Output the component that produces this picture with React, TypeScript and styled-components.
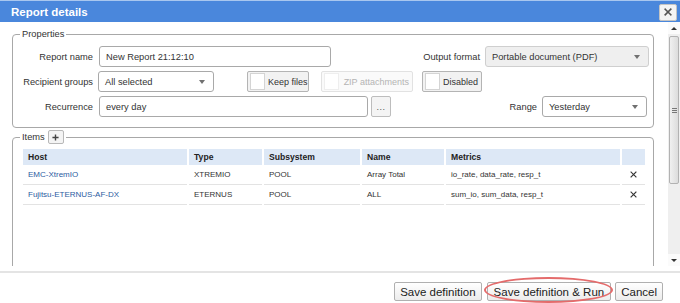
import React from "react";
import styled, { createGlobalStyle } from "styled-components";

const GlobalStyle = createGlobalStyle`
  html, body {
    margin: 0;
    padding: 0;
    background: #ffffff;
  }
  body {
    font-family: "Liberation Sans", Arial, sans-serif;
    color: #333333;
  }
  * {
    box-sizing: border-box;
  }
`;

const Dialog = styled.div`
  width: 680px;
  height: 303px;
  display: flex;
  flex-direction: column;
  background: #ffffff;
  overflow: hidden;
`;

const TitleBar = styled.div`
  height: 22px;
  border-top: 1px solid #a9c7ef;
  background: #4a87dc;
  display: flex;
  align-items: center;
  padding: 0 3px 0 11px;
`;

const Title = styled.div`
  flex: 1;
  color: #ffffff;
  font-weight: bold;
  font-size: 11.5px;
`;

const CloseButton = styled.div`
  width: 18px;
  height: 17px;
  margin-top: 1px;
  border: 1px solid #c4c4c4;
  border-radius: 2px;
  background: #f4f4f4;
  display: flex;
  align-items: center;
  justify-content: center;
`;

const Body = styled.div`
  height: 244px;
  display: flex;
  overflow: hidden;
`;

const Content = styled.div`
  flex: 1;
  padding: 6px 14px 0 12px;
  overflow: hidden;
`;

const Fieldset = styled.fieldset<{ $tall?: boolean }>`
  margin: 0 0 2px 0;
  border: 1px solid #a8a8a8;
  border-radius: 4px;
  padding: ${(p) => (p.$tall ? "5px 7px 0 10px" : "6px 0 10px 0")};
  min-height: ${(p) => (p.$tall ? "200px" : "auto")};
  min-width: 0;
`;

const Legend = styled.legend<{ $shift?: number }>`
  margin-left: ${(p) => p.$shift ?? 7}px;
  padding: 0 2px;
  font-size: 9.3px;
  line-height: 12px;
  color: #333333;
  display: flex;
  align-items: center;
  gap: 3px;
`;

const PlusButton = styled.div`
  width: 16px;
  height: 14px;
  border: 1px solid #b8b8b8;
  border-radius: 2px;
  background: #f4f4f4;
  display: flex;
  align-items: center;
  justify-content: center;
`;

const Rows = styled.div`
  display: flex;
  flex-direction: column;
  gap: 4px;
`;

const Row = styled.div`
  display: flex;
  align-items: center;
  height: 21px;
`;

const Label = styled.div<{ $width?: number; $auto?: boolean }>`
  width: ${(p) => (p.$width ? `${p.$width}px` : "auto")};
  margin-left: ${(p) => (p.$auto ? "auto" : "0")};
  margin-right: 5px;
  text-align: right;
  font-size: 9.3px;
  color: #333333;
  white-space: nowrap;
`;

const TextInput = styled.div<{ $width: number }>`
  width: ${(p) => p.$width}px;
  height: 21px;
  border: 1px solid #a9a9a9;
  border-radius: 3px;
  background: #ffffff;
  padding-left: 6px;
  display: flex;
  align-items: center;
  font-size: 9.3px;
  color: #333333;
  margin-left: 1px;
`;

const Select = styled.div<{ $width: number; $disabled?: boolean; $right?: number }>`
  width: ${(p) => p.$width}px;
  height: 21px;
  margin-right: ${(p) => p.$right ?? 0}px;
  border: 1px solid ${(p) => (p.$disabled ? "#cfcfcf" : "#a9a9a9")};
  border-radius: 3px;
  background: ${(p) => (p.$disabled ? "#efefef" : "#ffffff")};
  padding: 0 8px 0 6px;
  display: flex;
  align-items: center;
  font-size: 9.3px;
  color: #333333;
`;

const SelectText = styled.span`
  flex: 1;
  white-space: nowrap;
`;

const Caret = styled.span`
  width: 0;
  height: 0;
  border-left: 3px solid transparent;
  border-right: 3px solid transparent;
  border-top: 4px solid #707070;
`;

const Toggle = styled.div<{ $width: number; $gap: number; $disabled?: boolean }>`
  width: ${(p) => p.$width}px;
  height: 21px;
  margin-left: ${(p) => p.$gap}px;
  border: 1px solid ${(p) => (p.$disabled ? "#e2e2e2" : "#b4b4b4")};
  border-radius: 2px;
  background: ${(p) => (p.$disabled ? "#fafafa" : "#f2f2f2")};
  padding: 1px 3px 1px 2px;
  display: flex;
  align-items: center;
  gap: 3px;
  font-size: 9px;
  color: ${(p) => (p.$disabled ? "#b4b4b4" : "#333333")};
  white-space: nowrap;
`;

const ToggleBox = styled.span<{ $disabled?: boolean }>`
  width: 15px;
  height: 17px;
  background: #ffffff;
  border: 1px solid ${(p) => (p.$disabled ? "#eeeeee" : "#d4d4d4")};
  flex-shrink: 0;
`;

const ToggleText = styled.span`
  flex: 1;
  text-align: right;
`;

const MoreButton = styled.div`
  width: 20px;
  height: 21px;
  margin-left: 3px;
  border: 1px solid #bdbdbd;
  border-radius: 2px;
  background: #f4f4f4;
  display: flex;
  align-items: center;
  justify-content: center;
  font-size: 9px;
  letter-spacing: 0.5px;
  color: #555555;
`;

const Table = styled.div`
  display: grid;
  grid-template-columns: 164px 73px 96px 82px 174px 23px;
  column-gap: 2px;
`;

const Cell = styled.div<{ $head?: boolean; $link?: boolean; $center?: boolean }>`
  height: ${(p) => (p.$head ? "16px" : "20px")};
  background: ${(p) => (p.$head ? "#dde8f6" : "#ffffff")};
  border-bottom: ${(p) => (p.$head ? "none" : "1px solid #e3e3e3")};
  padding-left: ${(p) => (p.$center ? "0" : "5px")};
  display: flex;
  align-items: center;
  justify-content: ${(p) => (p.$center ? "center" : "flex-start")};
  font-size: ${(p) => (p.$head ? "8.6px" : "8px")};
  font-weight: ${(p) => (p.$head ? "bold" : "normal")};
  color: ${(p) => (p.$link ? "#2c5c9f" : p.$head ? "#222222" : "#333333")};
  white-space: nowrap;
`;

const Scrollbar = styled.div`
  width: 12px;
  display: flex;
  flex-direction: column;
  background: #efefef;
`;

const ScrollArrow = styled.div<{ $down?: boolean }>`
  height: 12px;
  background: #fbfbfb;
  display: flex;
  align-items: center;
  justify-content: center;

  &::before {
    content: "";
    width: 0;
    height: 0;
    border-left: 3px solid transparent;
    border-right: 3px solid transparent;
    ${(p) =>
      p.$down ? "border-top: 3px solid #333333;" : "border-bottom: 3px solid #333333;"}
  }
`;

const Track = styled.div`
  flex: 1;
  padding: 2px 1px 0 1px;
`;

const Thumb = styled.div`
  height: 148px;
  border: 1px solid #b2b2b2;
  border-radius: 2px;
  background: linear-gradient(to right, #f0f0f0, #dcdcdc);
  display: flex;
  align-items: center;
  justify-content: center;
`;

const Grip = styled.span`
  width: 5px;
  height: 5px;
  border-top: 1px solid #777777;
  border-bottom: 1px solid #777777;
  position: relative;

  &::after {
    content: "";
    position: absolute;
    left: 0;
    right: 0;
    top: 1px;
    border-top: 1px solid #777777;
  }
`;

const Footer = styled.div`
  margin-top: 5px;
  flex: 1;
  border-top: 2px solid #e4e4e4;
  display: flex;
  justify-content: flex-end;
  align-items: flex-start;
  padding: 9px 17px 0 0;
  gap: 4px;
`;

const FooterButton = styled.div<{ $mark?: boolean }>`
  position: relative;
  height: 19px;
  padding: 0 ${(p) => (p.$mark ? 6 : 5)}px;
  margin-left: ${(p) => (p.$mark ? "1px" : "0")};
  border: 1px solid #b0b0b0;
  border-radius: 2px;
  background: linear-gradient(#ffffff, #ececec);
  display: flex;
  align-items: center;
  font-size: 11.5px;
  color: #222222;
  white-space: nowrap;

  ${(p) =>
    p.$mark &&
    `
    &::after {
      content: "";
      position: absolute;
      left: -4px;
      right: -3px;
      top: -6px;
      bottom: -3px;
      border: 2px solid #e46b6b;
      border-radius: 50%;
      pointer-events: none;
    }
  `}
`;

const CrossIcon = ({ size, weight, color }: { size: number; weight: number; color: string }) => (
  <svg width={size} height={size} viewBox="0 0 10 10">
    <path d="M1.5 1.5 L8.5 8.5 M8.5 1.5 L1.5 8.5" stroke={color} strokeWidth={weight} strokeLinecap="square" />
  </svg>
);

const PlusIcon = () => (
  <svg width="7" height="7" viewBox="0 0 8 8">
    <path d="M4 0.5 V7.5 M0.5 4 H7.5" stroke="#444" strokeWidth="1.6" />
  </svg>
);

const items = [
  { host: "EMC-XtremIO", type: "XTREMIO", subsystem: "POOL", name: "Array Total", metrics: "io_rate, data_rate, resp_t" },
  { host: "Fujitsu-ETERNUS-AF-DX", type: "ETERNUS", subsystem: "POOL", name: "ALL", metrics: "sum_io, sum_data, resp_t" },
];

export default function App() {
  return (
    <>
      <GlobalStyle />
      <Dialog>
        <TitleBar>
          <Title>Report details</Title>
          <CloseButton>
            <CrossIcon size={8} weight={2} color="#555555" />
          </CloseButton>
        </TitleBar>
        <Body>
          <Content>
            <Fieldset>
              <Legend>Properties</Legend>
              <Rows>
                <Row>
                  <Label $width={80}>Report name</Label>
                  <TextInput $width={232}>New Report 21:12:10</TextInput>
                  <Label $auto>Output format</Label>
                  <Select $width={164} $disabled $right={4}>
                    <SelectText>Portable document (PDF)</SelectText>
                    <Caret />
                  </Select>
                </Row>
                <Row>
                  <Label $width={80}>Recipient groups</Label>
                  <Select $width={116}>
                    <SelectText>All selected</SelectText>
                    <Caret />
                  </Select>
                  <Toggle $width={62} $gap={33}>
                    <ToggleBox />
                    <ToggleText>Keep files</ToggleText>
                  </Toggle>
                  <Toggle $width={92} $gap={12} $disabled>
                    <ToggleBox $disabled />
                    <ToggleText>ZIP attachments</ToggleText>
                  </Toggle>
                  <Toggle $width={60} $gap={9}>
                    <ToggleBox />
                    <ToggleText>Disabled</ToggleText>
                  </Toggle>
                </Row>
                <Row>
                  <Label $width={80}>Recurrence</Label>
                  <TextInput $width={269}>every day</TextInput>
                  <MoreButton>...</MoreButton>
                  <Label $auto>Range</Label>
                  <Select $width={105} $right={6}>
                    <SelectText>Yesterday</SelectText>
                    <Caret />
                  </Select>
                </Row>
              </Rows>
            </Fieldset>
            <Fieldset $tall>
              <Legend $shift={-3}>
                Items
                <PlusButton>
                  <PlusIcon />
                </PlusButton>
              </Legend>
              <Table>
                <Cell $head>Host</Cell>
                <Cell $head>Type</Cell>
                <Cell $head>Subsystem</Cell>
                <Cell $head>Name</Cell>
                <Cell $head>Metrics</Cell>
                <Cell $head />
                {items.map((it) => (
                  <React.Fragment key={it.host}>
                    <Cell $link>{it.host}</Cell>
                    <Cell>{it.type}</Cell>
                    <Cell>{it.subsystem}</Cell>
                    <Cell>{it.name}</Cell>
                    <Cell>{it.metrics}</Cell>
                    <Cell $center>
                      <CrossIcon size={7} weight={1.6} color="#333" />
                    </Cell>
                  </React.Fragment>
                ))}
              </Table>
            </Fieldset>
          </Content>
          <Scrollbar>
            <ScrollArrow />
            <Track>
              <Thumb>
                <Grip />
              </Thumb>
            </Track>
            <ScrollArrow $down />
          </Scrollbar>
        </Body>
        <Footer>
          <FooterButton>Save definition</FooterButton>
          <FooterButton $mark>Save definition &amp; Run</FooterButton>
          <FooterButton>Cancel</FooterButton>
        </Footer>
      </Dialog>
    </>
  );
}
